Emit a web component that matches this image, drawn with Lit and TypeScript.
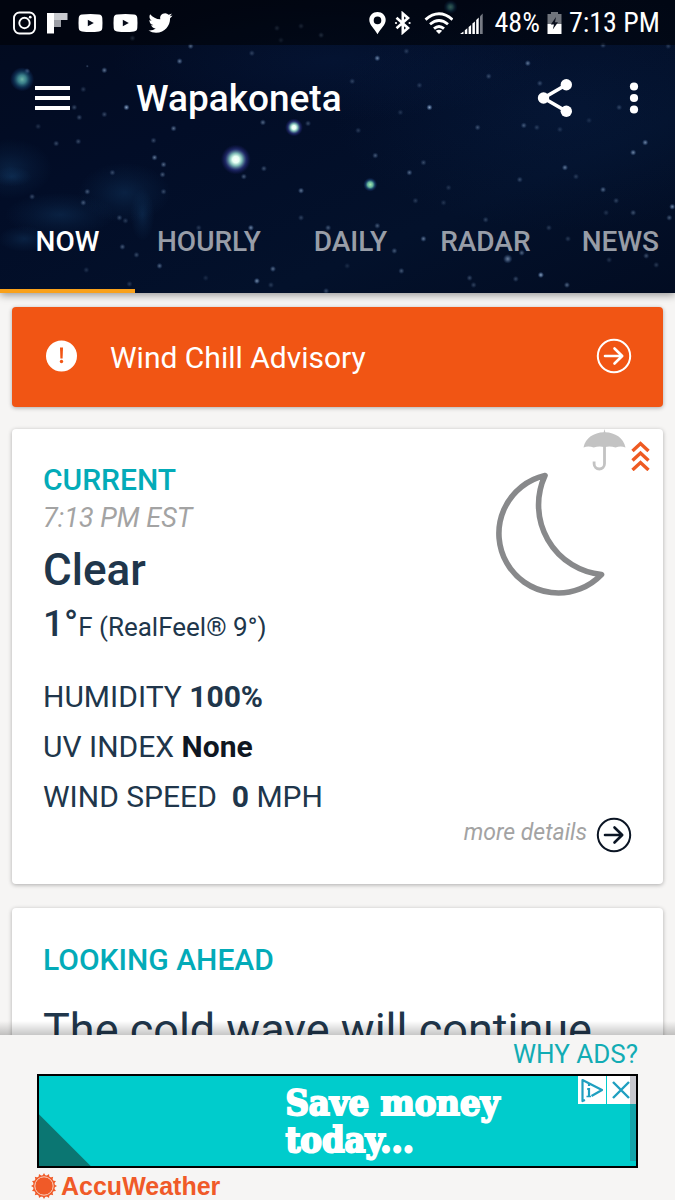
import { LitElement, html, svg, css } from "lit";
import { customElement, property, state } from "lit/decorators.js";
import { classMap } from "lit/directives/class-map.js";

// x, y, radius, opacity
const STARS: number[][] = [
  [190, 46, 2, 0.6], [179, 61, 2, 0.7], [27, 71, 2, 0.6], [104, 70, 2, 0.7], [87, 66, 1, 0.4],
  [83, 89, 2, 0.3], [126, 107, 2, 1], [74, 107, 2, 0.4], [79, 117, 2, 0.4], [104, 114, 2, 0.4],
  [38, 126, 2, 0.25], [262, 122, 2, 0.6], [307, 123, 2, 0.4], [173, 128, 2, 0.65], [153, 140, 2, 0.4],
  [78, 141, 2, 0.4], [56, 143, 2, 0.4], [132, 38, 2, 0.5], [251, 53, 2, 0.35], [276, 28, 2, 0.4],
  [300, 26, 2, 0.4], [320, 35, 2, 0.5], [280, 40, 2, 0.3], [376, 58, 2, 0.8], [405, 51, 2, 0.3],
  [526, 63, 2, 0.7], [487, 76, 2, 0.4], [428, 107, 2, 1], [418, 85, 2, 0.3], [351, 81, 2, 0.35],
  [538, 83, 2, 0.4], [476, 127, 2, 0.45], [522, 125, 2, 0.5], [357, 130, 2, 0.3], [535, 127, 2, 0.3],
  [643, 142, 2, 0.8], [617, 107, 2, 0.35], [601, 45, 2, 0.4], [666, 46, 2, 0.3], [587, 120, 2, 0.2],
  [399, 112, 2, 0.25], [558, 129, 2, 0.25], [154, 157, 2, 0.7], [163, 164, 2, 0.6], [162, 174, 2, 0.5],
  [112, 172, 2, 0.4], [263, 168, 2, 0.45], [243, 176, 2, 0.5], [300, 190, 2, 0.7], [87, 191, 2, 0.5],
  [83, 202, 2, 0.5], [32, 196, 2, 0.4], [163, 191, 2, 0.4], [250, 227, 2, 0.8], [300, 217, 2, 0.35],
  [122, 246, 2, 0.5], [136, 254, 2, 0.4], [86, 269, 2, 0.25], [159, 265, 2, 0.6], [205, 277, 2, 0.2],
  [256, 280, 2, 0.85], [272, 268, 2, 0.65], [270, 284, 2, 0.3], [119, 217, 2, 0.4], [125, 220, 2, 0.3],
  [129, 283, 2, 0.3], [327, 227, 2, 0.5], [198, 227, 2, 0.3], [325, 290, 2, 0.4], [374, 155, 2, 0.5],
  [408, 172, 2, 0.6], [422, 162, 2, 0.4], [518, 179, 2, 0.4], [563, 167, 2, 0.7], [574, 176, 2, 0.3],
  [601, 189, 2, 0.6], [614, 200, 2, 0.35], [631, 212, 2, 0.45], [631, 152, 2, 0.8], [670, 206, 2, 0.8],
  [667, 217, 2, 0.5], [604, 212, 2, 0.25], [484, 219, 2, 0.35], [547, 227, 2, 0.3], [422, 238, 2, 0.7],
  [393, 250, 2, 0.5], [376, 225, 2, 0.5], [566, 238, 2, 0.3], [506, 258, 3, 0.75], [520, 252, 2, 0.6],
  [539, 274, 2, 1], [514, 278, 2, 0.4], [565, 284, 2, 0.6], [468, 277, 2, 0.4], [472, 284, 2, 0.35],
  [400, 270, 2, 0.5], [644, 255, 2, 0.45], [414, 200, 2, 0.3], [447, 187, 2, 0.25], [654, 264, 2, 0.3],
  [607, 259, 2, 0.25], [346, 265, 2, 0.2], [442, 202, 2, 0.25],
];

// x, y, halo radius, gradient id
const GLOWS: [number, number, number, string][] = [
  [235, 159, 15, "glow"],
  [293, 127, 9, "glow"],
  [369, 184, 7, "glow-green"],
  [22, 79, 12, "glow-teal"],
  [449, 7, 7, "glow-teal"],
];

@customElement("night-sky")
class NightSky extends LitElement {
  static styles = css`
    :host { display: block; }
    .sky { display: block; width: 100%; height: 100%; }
  `;

  render() {
    return html`
      <svg class="sky" viewBox="0 0 675 292" preserveAspectRatio="xMinYMin slice" aria-hidden="true">
        <defs>
          <linearGradient id="base" x1="0" y1="0" x2="1" y2="1">
            <stop offset="0" stop-color="#020a1e" />
            <stop offset="0.35" stop-color="#020d27" />
            <stop offset="0.7" stop-color="#03112b" />
            <stop offset="1" stop-color="#020c22" />
          </linearGradient>
          <radialGradient id="mist"><stop offset="0" stop-color="#1d578c" stop-opacity="0.26" /><stop offset="0.5" stop-color="#1d578c" stop-opacity="0.11" /><stop offset="1" stop-color="#1d578c" stop-opacity="0" /></radialGradient>
          <radialGradient id="haze"><stop offset="0" stop-color="#0d2c5c" stop-opacity="0.2" /><stop offset="1" stop-color="#0d2c5c" stop-opacity="0" /></radialGradient>
          <radialGradient id="dot"><stop offset="0" stop-color="#b9d3f2" /><stop offset="0.4" stop-color="#8fb0da" stop-opacity="0.7" /><stop offset="1" stop-color="#4a74b0" stop-opacity="0" /></radialGradient>
          <radialGradient id="glow"><stop offset="0" stop-color="#fff" /><stop offset="0.22" stop-color="#e4fff2" /><stop offset="0.42" stop-color="#7cb9b4" /><stop offset="0.7" stop-color="#2b3480" stop-opacity="0.7" /><stop offset="1" stop-color="#1a1a66" stop-opacity="0" /></radialGradient>
          <radialGradient id="glow-green"><stop offset="0" stop-color="#a9ecb0" /><stop offset="0.4" stop-color="#5fae9a" /><stop offset="0.7" stop-color="#1c4d7c" stop-opacity="0.6" /><stop offset="1" stop-color="#1a2a66" stop-opacity="0" /></radialGradient>
          <radialGradient id="glow-teal"><stop offset="0" stop-color="#6db5a8" /><stop offset="0.35" stop-color="#3f8a94" stop-opacity="0.9" /><stop offset="0.7" stop-color="#123f66" stop-opacity="0.6" /><stop offset="1" stop-color="#12306a" stop-opacity="0" /></radialGradient>
        </defs>
        <rect width="675" height="292" fill="url(#base)" />
        <ellipse cx="560" cy="110" rx="230" ry="120" fill="url(#haze)" />
        <ellipse cx="330" cy="60" rx="220" ry="60" fill="url(#haze)" />
        <ellipse cx="10" cy="168" rx="42" ry="30" fill="url(#mist)" />
        <ellipse cx="12" cy="176" rx="20" ry="10" fill="url(#mist)" />
        <ellipse cx="60" cy="214" rx="55" ry="22" fill="url(#mist)" />
        <ellipse cx="124" cy="192" rx="46" ry="30" fill="url(#mist)" />
        <ellipse cx="142" cy="214" rx="12" ry="26" fill="url(#mist)" />
        <ellipse cx="24" cy="238" rx="26" ry="13" fill="url(#mist)" />
        ${STARS.map(([x, y, r, o]) => svg`<circle cx=${x} cy=${y} r=${r * 1.6} opacity=${o * 0.75} fill="url(#dot)" />`)}
        ${GLOWS.map(([x, y, r, id]) => svg`<circle cx=${x} cy=${y} r=${r} fill=${`url(#${id})`} />`)}
      </svg>
    `;
  }
}

@customElement("circle-arrow")
class CircleArrow extends LitElement {
  static styles = css`
    :host { display: block; flex: none; }
    .icon { display: block; width: 36px; height: 36px; }
  `;

  render() {
    return html`
      <svg class="icon" viewBox="0 0 36 36" fill="none" stroke="currentColor" aria-hidden="true">
        <circle cx="18" cy="18" r="16.2" stroke-width="2" />
        <path d="M9 18H26M18.5 10.5L26.2 18L18.5 25.5" stroke-width="2.6" stroke-linecap="round" stroke-linejoin="round" />
      </svg>
    `;
  }
}

@customElement("status-bar")
class StatusBar extends LitElement {
  static styles = css`
    :host {
      display: flex;
      align-items: center;
      justify-content: space-between;
      height: 45px;
      padding: 0 15px 0 13px;
      background: rgba(0, 0, 0, 0.5);
      color: #fff;
    }
    .group { display: flex; align-items: center; }
    .notes { gap: 10px; }
    .system { gap: 7px; }
    .text { font: 400 28px/45px "Roboto Condensed", Roboto, sans-serif; white-space: nowrap; }
    svg { display: block; flex: none; }
  `;

  private youtube() {
    return html`
      <svg width="25" height="24" viewBox="0 0 25 24" aria-label="YouTube">
        <path fill="#fff" d="M4 3.6Q12.500 2.600 21 3.600Q24 3.800 24.300 7Q24.700 12 24.300 17Q24 20.200 21 20.400Q12.500 21.400 4 20.400Q1 20.200 .7 17Q.3 12 .7 7Q1 3.800 4 3.600Z" />
        <path fill="#050a18" d="M9.800 8.800L15.800 12L9.800 15.200Z" />
      </svg>
    `;
  }

  render() {
    return html`
      <div class="group notes">
        <svg width="23" height="24" viewBox="0 0 23 24" fill="none" stroke="#fff" aria-label="Instagram">
          <rect x="1" y="1.500" width="21" height="21" rx="5.500" stroke-width="1.900" />
          <circle cx="11.500" cy="12" r="5.200" stroke-width="1.900" />
          <circle cx="17.200" cy="6.200" r="1.400" fill="#fff" stroke="none" />
        </svg>
        <svg width="22" height="24" viewBox="0 0 22 24" aria-label="Flipboard">
          <path fill="#fff" d="M1 2H8V22.500H1Z" />
          <path fill="#c9cbd0" d="M8 2H21.500V9H8Z" />
          <path fill="#9b9da4" d="M8 9H15V16H8Z" />
        </svg>
        ${this.youtube()} ${this.youtube()}
        <svg width="25" height="24" viewBox="0 0 24 24" aria-label="Twitter">
          <path fill="#fff" d="M23.950 4.570a10 10 0 0 1-2.820.77 4.960 4.960 0 0 0 2.160-2.720c-.95.56-2 .96-3.130 1.180a4.920 4.920 0 0 0-8.380 4.480C7.690 8.100 4.070 6.130 1.640 3.160a4.820 4.820 0 0 0-.67 2.480c0 1.710.87 3.210 2.190 4.100a4.900 4.900 0 0 1-2.230-.62v.06a4.920 4.920 0 0 0 3.950 4.830 5 5 0 0 1-2.210.08 4.940 4.940 0 0 0 4.600 3.420A9.870 9.870 0 0 1 0 19.540a13.990 13.990 0 0 0 7.560 2.210c9.050 0 14-7.500 14-13.980 0-.21 0-.42-.02-.63a9.940 9.940 0 0 0 2.460-2.550z" />
        </svg>
      </div>
      <div class="group system">
        <svg width="19" height="24" viewBox="0 0 19 24" aria-label="Location">
          <path fill="#fff" fill-rule="evenodd" d="M9.500 1C4.900 1 1.300 4.500 1.300 9C1.300 14 6.300 17.500 9.500 23.200C12.700 17.500 17.700 14 17.700 9C17.700 4.500 14.100 1 9.500 1ZM9.500 5.600A3.800 3.800 0 1 1 9.500 13.200A3.800 3.800 0 1 1 9.500 5.600Z" />
        </svg>
        <svg width="18" height="24" viewBox="0 0 18 24" fill="none" stroke="#fff" aria-label="Bluetooth">
          <path d="M2.500 6.800L14 17L8.800 21.500V2.500L14 7L2.500 17.200" stroke-width="2.600" stroke-linejoin="miter" />
          <circle cx="2" cy="12" r="1.100" fill="#fff" stroke="none" /><circle cx="15.600" cy="12" r="1.100" fill="#fff" stroke="none" />
        </svg>
        <svg width="34" height="24" viewBox="0 0 34 24" fill="none" stroke="#fff" stroke-width="2.800" aria-label="Wi-Fi">
          <path d="M6.500 8.600Q20 -3.200 33.500 8.600" /><path d="M11 13.300Q20 5.600 29 13.300" /><path d="M15 17.600Q20 13.300 25 17.600" />
          <path fill="#fff" stroke="none" d="M16.800 19.800Q20 17.600 23.200 19.800L20 23Z" />
        </svg>
        <svg width="28" height="24" viewBox="0 0 28 24" aria-label="Signal">
          <path fill="#fff" d="M0 23L3.500 20.400V23ZM4.800 19.200L7.300 17.300V23H4.800ZM8.600 16L11.100 14V23H8.600ZM12.400 12.600L14.900 10.400V23H12.400ZM16.200 9L18.700 6.600V23H16.200Z" />
          <path fill="#777b85" d="M20 5.200L22.700 2.400V23H20Z" />
        </svg>
        <span class="text">48%</span>
        <svg width="15" height="24" viewBox="0 0 15 24" aria-label="Charging">
          <path fill="#70747c" d="M4 1H11V3H14.500V13H.5V3H4Z" /><path fill="#fff" d="M.5 13H14.500V23H.5Z" />
          <path fill="#0a0f1c" d="M9 6L3.800 13.500H7L5.800 18.500L11 11.300H8Z" />
        </svg>
        <span class="text">7:13 PM</span>
      </div>
    `;
  }
}

@customElement("app-root")
class AppRoot extends LitElement {
  @property() city = "Wapakoneta";
  @state() private active = "NOW";

  static styles = css`
    * { box-sizing: border-box; }
    :host {
      display: flex;
      flex-direction: column;
      height: 100vh;
      overflow: hidden;
      background: #f6f5f4;
      color: #20364b;
      font-family: Roboto, sans-serif;
    }
    button { border: 0; background: none; padding: 0; margin: 0; color: inherit; font: inherit; cursor: pointer; }
    a { color: inherit; text-decoration: none; }
    svg { display: block; flex: none; }
    h1, h2, p { margin: 0; }

    .header { position: relative; z-index: 1; flex: none; background: #020d26; color: #fff; box-shadow: 0 2px 8px rgba(0, 0, 0, 0.4); }
    .sky { position: absolute; inset: 0; z-index: -1; overflow: hidden; }
    .toolbar { display: flex; align-items: center; height: 105px; padding: 0 36px 0 35px; }
    .title { flex: 1; padding: 2px 0 0 65px; font-size: 37px; line-height: 44px; font-weight: 500; }
    .actions { display: flex; align-items: center; gap: 56px; }

    .tabs { display: flex; margin-top: 41px; overflow: hidden; }
    .tab {
      flex: none;
      min-width: 135px;
      height: 102px;
      padding: 0 22px;
      border-bottom: 4px solid transparent;
      border-top: 4px solid transparent;
      font-size: 28px;
      line-height: 32px;
      font-weight: 500;
      color: rgba(255, 255, 255, 0.6);
    }
    .tab.on { color: #fff; border-bottom-color: #f9a11b; }

    .main { flex: 1; min-height: 0; overflow: hidden; padding: 14px 12px 0; }
    .card { border-radius: 4px; background: #fff; box-shadow: 0 1px 4px rgba(0, 0, 0, 0.3); }
    .alert {
      display: flex;
      align-items: center;
      height: 100px;
      padding: 0 31px 2px 34px;
      background: #f15514;
      color: #fff;
      font-size: 30px;
      line-height: 36px;
    }
    .alert-text { flex: 1; padding: 4px 0 0 33px; }

    .current { display: flex; margin-top: 22px; }
    .facts { flex: 1; padding: 31px 0 62px 31px; }
    .heading { font-size: 30px; line-height: 40px; font-weight: 500; color: #03abb8; }
    .time { font-size: 27px; line-height: 36px; font-style: italic; color: #a3a3a3; }
    .sky-state { font-size: 44px; line-height: 68px; font-weight: 500; }
    .temp { font-size: 26px; line-height: 46px; }
    .degrees { font-size: 37px; line-height: 38px; font-weight: 500; }
    .metrics { padding-top: 22px; font-size: 30px; line-height: 50px; }
    .metrics strong { font-weight: 700; }
    .metrics .plain { color: #0f1722; }
    .wide { white-space: pre; }

    .side { display: flex; flex-direction: column; align-items: flex-end; padding: 0 12px 31px 0; }
    .moon { margin: 1px 46px 0 0; overflow: visible; }
    .details {
      display: flex;
      align-items: center;
      gap: 9px;
      margin: auto 19px 0 0;
      color: #0b1524;
      font-size: 23px;
      line-height: 32px;
    }
    .details-text { padding-bottom: 4px; font-style: italic; color: #a3a3a3; }

    .ahead { margin-top: 24px; padding: 32px 31px 60px; }
    .headline { padding-top: 20px; font-size: 45px; line-height: 60px; white-space: nowrap; }

    .footer { position: relative; flex: none; padding: 0 37px; background: #f6f5f4; }
    .footer::before {
      content: "";
      position: absolute;
      left: 0;
      right: 0;
      bottom: 100%;
      height: 14px;
      background: linear-gradient(to top, rgba(0, 0, 0, 0.22), rgba(0, 0, 0, 0));
    }
    .why { display: block; text-align: right; font-size: 26px; line-height: 39px; color: #12acb4; }
    .ad {
      position: relative;
      display: flex;
      align-items: center;
      height: 94px;
      border: 2px solid #000;
      padding-left: 41%;
      background: linear-gradient(45deg, #0b7672 36px, #00cccc 37px);
      color: #fff;
    }
    .ad-text { font: 700 36px/37px "DejaVu Serif Condensed", "DejaVu Serif", serif; -webkit-text-stroke: 2px #fff; white-space: nowrap; }
    .ad-tools { position: absolute; top: 0; right: 0; display: flex; gap: 1px; }
    .ad-tool { display: block; background: #fff; }
    .ad-edge { position: absolute; top: 0; right: 0; width: 6px; height: 85px; background: rgba(70, 70, 90, 0.3); }
    .brand { display: flex; align-items: center; gap: 4px; height: 32px; padding-top: 4px; margin-left: -6px; color: #f05a28; }
    .brand-name { font: 700 25px/28px "Liberation Sans", Arial, sans-serif; }
  `;

  private tabs = ["NOW", "HOURLY", "DAILY", "RADAR", "NEWS"];

  private sunTeeth() {
    return Array.from({ length: 16 }, (_, i) => svg`<path d="M13 0L15.300 4H10.700Z" transform=${`rotate(${i * 22.5} 13 13)`} />`);
  }

  render() {
    return html`
      <header class="header">
        <night-sky class="sky"></night-sky>
        <status-bar></status-bar>
        <div class="toolbar">
          <button aria-label="Menu">
            <svg width="36" height="24" viewBox="0 0 36 24" fill="#fff"><path d="M0 0H35V4H0ZM0 10H35V14H0ZM0 20H35V24H0Z" /></svg>
          </button>
          <h1 class="title">${this.city}</h1>
          <div class="actions">
            <button aria-label="Share">
              <svg width="36" height="38" viewBox="0 0 36 38" fill="#fff">
                <path d="M29.300 5.700L6.500 19L29.300 32.300" fill="none" stroke="#fff" stroke-width="3.600" />
                <circle cx="29.300" cy="5.700" r="5.700" /><circle cx="6.500" cy="19" r="5.700" /><circle cx="29.300" cy="32.300" r="5.700" />
              </svg>
            </button>
            <button aria-label="More options">
              <svg width="10" height="32" viewBox="0 0 10 32" fill="#fff"><circle cx="5" cy="4.500" r="4.100" /><circle cx="5" cy="16" r="4.100" /><circle cx="5" cy="27.500" r="4.100" /></svg>
            </button>
          </div>
        </div>
        <nav class="tabs" role="tablist">
          ${this.tabs.map(
            (name) => html`<button
              class=${classMap({ tab: true, on: name === this.active })}
              role="tab"
              aria-selected=${name === this.active ? "true" : "false"}
              @click=${() => (this.active = name)}
            >${name}</button>`
          )}
        </nav>
      </header>

      <main class="main">
        <a class="card alert" href="#advisory">
          <svg width="31" height="32" viewBox="0 0 31 32">
            <circle cx="15.500" cy="16" r="15.500" fill="#fff" />
            <path d="M14 7.500H17L16.600 18.500H14.400Z" fill="#f15514" /><circle cx="15.500" cy="21.500" r="1.700" fill="#f15514" />
          </svg>
          <span class="alert-text">Wind Chill Advisory</span>
          <circle-arrow></circle-arrow>
        </a>

        <section class="card current">
          <div class="facts">
            <h2 class="heading">CURRENT</h2>
            <p class="time">7:13 PM EST</p>
            <p class="sky-state">Clear</p>
            <p class="temp"><span class="degrees">1°</span>F (RealFeel® 9°)</p>
            <div class="metrics">
              <p>HUMIDITY <strong>100%</strong></p>
              <p>UV INDEX <strong class="plain">None</strong></p>
              <p class="wide">WIND SPEED  <strong>0</strong> MPH</p>
            </div>
          </div>
          <div class="side">
            <svg width="68" height="42" viewBox="0 0 68 42" fill="none" aria-label="Precipitation rising">
              <path fill="#c3c3c3" d="M.5 18.500C2.500 8.500 11 3.600 20.700 3.200L21.500 0L22.300 3.200C32 3.600 40.500 8.500 42.500 18.500Q37.500 16.500 32.500 18.600Q27 16.800 21.500 18.200Q16 16.800 10.700 18.600Q5.500 16.500 .5 18.500Z" />
              <path stroke="#c3c3c3" stroke-width="2.800" d="M21.500 17V34.800A5.200 5.200 0 0 1 11.100 34.800V32.500" />
              <path stroke="#ee5a22" stroke-width="3.400" d="M49.500 22L57.500 14.500L65.500 22M49.500 31.500L57.500 24L65.500 31.500M49.500 41L57.500 33.500L65.500 41" />
            </svg>
            <svg class="moon" width="112" height="125" viewBox="-3 0 112 125" fill="none" aria-label="Clear night">
              <path d="M49 3.500A59.500 59.500 0 1 0 105.500 102.500A70 70 0 0 1 49 3.500Z" stroke="#88898b" stroke-width="5.600" stroke-linejoin="round" />
            </svg>
            <a class="details" href="#details"><span class="details-text">more details</span><circle-arrow></circle-arrow></a>
          </div>
        </section>

        <section class="card ahead">
          <h2 class="heading">LOOKING AHEAD</h2>
          <p class="headline">The cold wave will continue</p>
        </section>
      </main>

      <footer class="footer">
        <a class="why" href="#ads">WHY ADS?</a>
        <div class="ad">
          <div class="ad-text">Save money<br />today...</div>
          <div class="ad-tools">
            <button class="ad-tool" aria-label="Ad choices">
              <svg width="28" height="28" viewBox="0 0 28 28" fill="none" stroke="#1f9fc0" stroke-width="2.200" stroke-linejoin="round">
                <path d="M7 24L4.500 25V4L24 14L13.500 20" /><path d="M11 12V20M11 8V10" /><path d="M8.500 20.500H13M9 13H11" stroke-width="1.600" />
              </svg>
            </button>
            <button class="ad-tool" aria-label="Close ad">
              <svg width="29" height="28" viewBox="0 0 29 28" stroke="#1f9fc0" stroke-width="2.400"><path d="M6 6L22 22M22 6L6 22" /></svg>
            </button>
          </div>
          <div class="ad-edge"></div>
        </div>
        <div class="brand">
          <svg width="26" height="26" viewBox="0 0 26 26" fill="#f05a28">
            ${this.sunTeeth()}
            <circle cx="13" cy="13" r="10.800" /><circle cx="13" cy="13" r="9.200" fill="none" stroke="#f9d3c3" stroke-width="1" />
          </svg>
          <span class="brand-name">AccuWeather</span>
        </div>
      </footer>
    `;
  }
}
